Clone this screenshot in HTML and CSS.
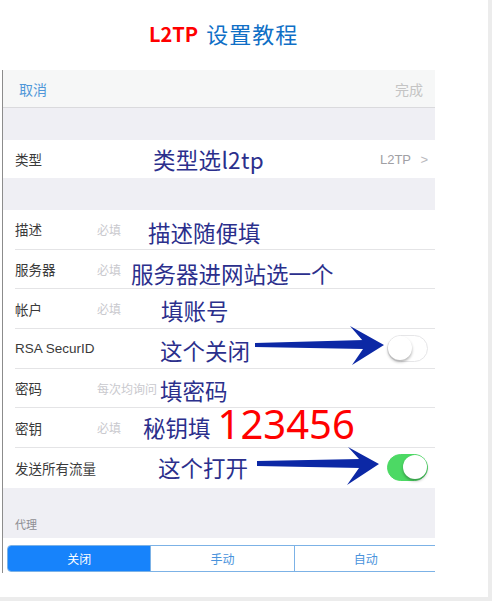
FILE: index.html
```html
<!DOCTYPE html>
<html lang="zh-CN">
<head>
    <meta charset="UTF-8">
    <meta name="viewport" content="width=device-width, initial-scale=1.0">
    <title>L2TP 设置教程</title>
    <link rel="stylesheet" href="styles.css">
</head>
<body>
    <div class="page">
        <h1 class="title"><span class="title-en">L2TP</span> <span class="title-cn">设置教程</span></h1>

        <!-- iOS VPN screen -->
        <div class="shot">
            <div class="navbar">
                <span class="nav-cancel">取消</span>
                <span class="nav-done">完成</span>
            </div>

            <div class="gap gap-top"></div>

            <div class="group group-type">
                <div class="row row-last">
                    <span class="label">类型</span>
                    <span class="note note-type">类型选l2tp</span>
                    <span class="value">L2TP <span class="chev">&gt;</span></span>
                </div>
            </div>

            <div class="gap gap-mid"></div>

            <div class="group">
                <div class="row">
                    <span class="label">描述</span>
                    <span class="hint">必填</span>
                    <span class="note note-desc">描述随便填</span>
                </div>
                <div class="row">
                    <span class="label">服务器</span>
                    <span class="hint">必填</span>
                    <span class="note note-server">服务器进网站选一个</span>
                </div>
                <div class="row">
                    <span class="label">帐户</span>
                    <span class="hint">必填</span>
                    <span class="note note-account">填账号</span>
                </div>
                <div class="row">
                    <span class="label label-en">RSA SecurID</span>
                    <span class="note note-rsa">这个关闭</span>
                    <svg class="arrow arrow-rsa" width="140" height="46" viewBox="0 0 140 46">
                        <polygon points="5,21 114,18 114,27 5,25" fill="#0c28a5"/>
                        <polygon points="100,4 134,23 102,43 113,27 113,19" fill="#0c28a5"/>
                    </svg>
                    <span class="switch"><span class="knob"></span></span>
                </div>
                <div class="row">
                    <span class="label">密码</span>
                    <span class="hint hint-ask">每次均询问</span>
                    <span class="note note-pass">填密码</span>
                </div>
                <div class="row">
                    <span class="label">密钥</span>
                    <span class="hint">必填</span>
                    <span class="note note-key">秘钥填<span class="key-num">123456</span></span>
                </div>
                <div class="row row-last">
                    <span class="label">发送所有流量</span>
                    <span class="note note-all">这个打开</span>
                    <svg class="arrow arrow-all" width="140" height="46" viewBox="0 0 140 46">
                        <polygon points="7,17 110,15 110,24 7,22" fill="#0c28a5"/>
                        <polygon points="98,3 129,20 97,41 109,24 109,15" fill="#0c28a5"/>
                    </svg>
                    <span class="switch switch-on"><span class="knob"></span></span>
                </div>
            </div>

            <div class="gap gap-proxy">
                <span class="proxy-title">代理</span>
            </div>

            <div class="seg-wrap">
                <div class="seg">
                    <span class="seg-item seg-active">关闭</span>
                    <span class="seg-item">手动</span>
                    <span class="seg-item">自动</span>
                </div>
            </div>
        </div>
    </div>
</body>
</html>
```

FILE: styles.css
```css
/* Page */
body {
    margin: 0;
    background-color: #ececec;
    font-family: "Noto Sans CJK SC", sans-serif;
}

.page {
    width: 488px;
    height: 597px;
    background-color: #fff;
}

.title {
    margin: 0;
    height: 70px;
    padding-left: 149px;
    display: flex;
    align-items: center;
    gap: 8px;
    font-size: 22px;
    font-weight: normal;
    box-sizing: border-box;
    padding-bottom: 4px;
}

.title-en {
    color: #ff0000;
    font-weight: bold;
    font-size: 20px;
}

.title-cn {
    color: #0f6fc6;
    letter-spacing: 1px;
}

/* Screenshot */
.shot {
    margin-left: 2px;
    width: 433px;
    height: 503px;
    border-left: 1px solid #8c8c8c;
    background-color: #efeff4;
    overflow: hidden;
    box-sizing: border-box;
}

.navbar {
    height: 37px;
    display: flex;
    align-items: center;
    justify-content: space-between;
    padding: 0 12px 0 16px;
    background-color: #f6f7f7;
    border-bottom: 1px solid #dadadd;
    font-size: 14px;
}

.nav-cancel {
    color: #4f97d9;
}

.nav-done {
    color: #c4c4c4;
}

.gap-top {
    height: 32px;
}

.gap-mid {
    height: 32px;
}

.group {
    background-color: #fff;
}

.row {
    position: relative;
    display: flex;
    align-items: center;
    height: 39.7px;
    margin-left: 12px;
    padding-right: 7px;
    border-bottom: 1px solid #e4e4e6;
    box-sizing: border-box;
}

.row-last {
    border-bottom: none;
}

.group-type .row {
    height: 38px;
}

.label {
    width: 82px;
    flex-shrink: 0;
    font-size: 13.5px;
    color: #3a3a3a;
}

.label-en {
    font-family: "Liberation Sans", "Noto Sans CJK SC", sans-serif;
}

.hint {
    font-size: 12px;
    color: #c9c9ce;
}

.hint-ask {
    width: 63px;
    overflow: hidden;
    white-space: nowrap;
}

.value {
    margin-left: auto;
    font-family: "Liberation Sans", sans-serif;
    font-size: 13px;
    color: #a0a0a4;
}

.chev {
    margin-left: 6px;
    color: #b8b8bc;
}

/* Annotations over the screenshot */
.note {
    position: absolute;
    top: 0;
    line-height: 40px;
    font-size: 22.5px;
    color: #2b2f8c;
    white-space: nowrap;
}

.note-type { left: 138px; top: -1px; letter-spacing: 0.3px; }
.note-desc { left: 133px; top: 2px; }
.note-server { left: 116px; top: 3px; }
.note-account { left: 146px; top: 1px; }
.note-rsa { left: 145px; top: 1px; }
.note-pass { left: 145px; top: 1px; }
.note-key { left: 128px; top: -1px; }
.note-all { left: 143px; top: -1px; }

.key-num {
    margin-left: 7px;
    font-family: "Noto Sans", sans-serif;
    font-size: 40px;
    color: #ff0000;
    line-height: 40px;
    vertical-align: top;
    position: relative;
    top: -3px;
}

.arrow {
    position: absolute;
    left: 235px;
}

.arrow-rsa { top: -7px; }
.arrow-all { top: -4px; }

/* Switches */
.switch {
    margin-left: auto;
    position: relative;
    width: 41px;
    height: 27px;
    border-radius: 14px;
    border: 1.5px solid #e6e6e8;
    background-color: #fff;
    box-sizing: border-box;
}

.switch .knob {
    position: absolute;
    top: 0;
    left: 0;
    width: 24px;
    height: 24px;
    border-radius: 50%;
    background-color: #fff;
    box-shadow: 0 2px 3px rgba(0, 0, 0, 0.3);
}

.switch-on {
    background-color: #4cd964;
    border-color: #4cd964;
}

.switch-on .knob {
    left: auto;
    right: 0;
}

/* Proxy */
.gap-proxy {
    height: 50px;
    display: flex;
    align-items: flex-end;
    padding: 0 0 6px 12px;
    box-sizing: border-box;
}

.proxy-title {
    font-size: 11px;
    color: #8e8e93;
}

.seg-wrap {
    background-color: #fff;
    padding: 7px 0 0 4px;
    height: 40px;
    box-sizing: border-box;
}

.seg {
    display: flex;
    width: 432px;
    height: 27px;
    border: 1px solid #7cb2e6;
    border-radius: 4px;
    overflow: hidden;
    box-sizing: border-box;
}

.seg-item {
    width: 143px;
    display: flex;
    align-items: center;
    justify-content: center;
    font-size: 12px;
    color: #4a93dc;
    border-right: 1px solid #7cb2e6;
}

.seg-active {
    background-color: #1783fb;
    color: #fff;
}
```
